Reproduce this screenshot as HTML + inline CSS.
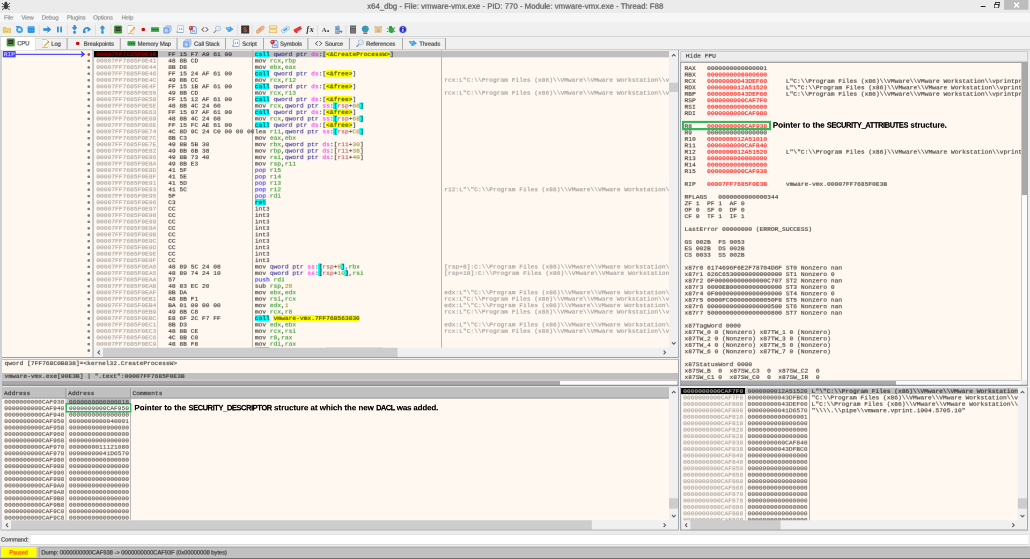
<!DOCTYPE html>
<html lang="en"><head><meta charset="utf-8"><title>x64_dbg</title>
<style>
html,body{margin:0;padding:0;width:1030px;height:559px;overflow:hidden;background:#f0f0f0}
#r{--a:0.3;--b:0.31;position:absolute;left:0;top:0;width:1920px;height:1042px;transform:scale(0.5364583);transform-origin:0 0;will-change:transform;background:#f0f0f0;overflow:hidden;font-family:"Liberation Sans",sans-serif;font-size:11px;color:#000}
#r div,#r span,#r svg{position:absolute;box-sizing:border-box}
#r .m,#r .m span{position:static}
#r .m{position:absolute;font-family:"Liberation Mono","DejaVu Sans Mono",monospace;font-size:11.6667px;line-height:12px;height:12px;white-space:pre;overflow:hidden;color:rgba(0,0,0,var(--a));text-shadow:1px 0 0,0 1px 0,1px 1px 0}
#r .u{white-space:nowrap;line-height:16px;height:16px;font-size:11px;letter-spacing:-0.2px;color:rgba(0,0,0,var(--b));text-shadow:1px 0 0,0 1px 0,1px 1px 0}
#r .u span{position:static}
.sel{background:#c0c0c0}
#r .a{color:rgba(128,128,128,var(--a))}
#r .g{color:rgba(0,131,0,var(--a))}
#r .v{color:rgba(130,130,0,var(--a))}
#r .n{color:rgba(0,0,128,var(--a))}
#r .s{color:rgba(255,0,255,var(--a))}
#r .p{color:rgba(0,0,255,var(--a))}
#r .b{color:rgba(176,52,52,var(--a))}
.c{background:#00ffff}
.y{background:#ffff00}
#r .rd{color:rgba(255,0,0,0.38)}
#r .r1{color:rgba(255,0,0,0.3)}
.an{font-weight:bold;white-space:nowrap;font-size:15px;line-height:18px;height:18px;color:#000;-webkit-text-stroke:0.2px}
#r .an span{position:static}
.k{font-size:14px;letter-spacing:-0.78px;-webkit-text-stroke:0.3px}
#r .z{--a:0.26}
.vs{background:#f0f0f0}
.th{background:#cdcdcd}
.ar{stroke:#606060;stroke-width:2;fill:none}
</style></head>
<body><div id="r">
<div style="left:0px;top:0px;width:1920px;height:24px;background:#ebebeb"></div>
<div style="left:0px;top:24px;width:1920px;height:17px;background:#f5f6f7"></div>
<div style="left:0px;top:41px;width:1920px;height:27px;background:#f0f0f0"></div>
<div style="left:0px;top:67px;width:1920px;height:2px;background:#d3d3d3"></div>
<div class="u" style="left:0;top:2px;width:1920px;text-align:center;font-size:14.6px;line-height:18px;height:18px;letter-spacing:0;color:rgba(60,60,60,0.34)">x64_dbg - File: vmware-vmx.exe - PID: 770 - Module: vmware-vmx.exe - Thread: F88</div>
<svg style="left:2px;top:1px" width="18" height="19" viewBox="0 0 18 19"><g fill="#3a3a3a" stroke="#3a3a3a"><ellipse cx="9" cy="11" rx="3.600" ry="5"/><circle cx="9" cy="5" r="2.300"/><path d="M5.500 8L1.500 5M12.500 8l4-3M5.500 11.500H1M12.500 11.500H17M5.500 14.500L2 17.500M12.500 14.500l3.500 3" stroke-width="1.500" fill="none"/></g></svg>
<div style="left:1872px;top:0px;width:45px;height:18px;background:#bdbdbd"></div>
<svg style="left:1887px;top:3px" width="16" height="13" viewBox="0 0 16 13"><path d="M3.5 2l9 9M12.5 2l-9 9" stroke="#fff" stroke-width="2.600" fill="none"/></svg>
<div style="left:1828px;top:10.5px;width:9px;height:2.5px;background:#1b1b2b"></div>
<div style="left:1855px;top:4px;width:9px;height:8px;border:1.5px solid #333;border-top-width:2.5px;background:#ebebeb"></div>
<div style="left:1852.5px;top:7px;width:9px;height:8px;border:1.5px solid #333;border-top-width:2.5px;background:#f4f4f4"></div>
<div class="u" style="left:7.3px;top:24px;color:rgba(110,110,110,var(--b))">File</div>
<div class="u" style="left:39.5px;top:24px;color:rgba(110,110,110,var(--b))">View</div>
<div class="u" style="left:77.3px;top:24px;color:rgba(110,110,110,var(--b))">Debug</div>
<div class="u" style="left:124.2px;top:24px;color:rgba(110,110,110,var(--b))">Plugins</div>
<div class="u" style="left:173.3px;top:24px;color:rgba(110,110,110,var(--b))">Options</div>
<div class="u" style="left:226px;top:24px;color:rgba(110,110,110,var(--b))">Help</div>
<svg style="left:4.9px;top:47.3px" width="16" height="16" viewBox="0 0 16 16"><path d="M1 4.500h5l1.500 1.500H15v8.500H1z" fill="#ecd377" stroke="#d2b558" stroke-width="1"/><path d="M2 3h4l1 1.500H2z" fill="#e2c45e"/><circle cx="5" cy="12" r="1" fill="#f08a7a"/><circle cx="9" cy="12" r="1" fill="#f08a7a"/></svg>
<svg style="left:27.8px;top:47.3px" width="16" height="16" viewBox="0 0 16 16"><circle cx="8.500" cy="8.500" r="6.500" fill="#4aa3ea"/><circle cx="8.500" cy="8.500" r="2.600" fill="#d8ecfb"/><path d="M1 1.500l7-.5-2.500 6z" fill="#2f8fe2"/><path d="M5.500 5.500l3 3" stroke="#d8ecfb" stroke-width="1.500"/></svg>
<svg style="left:50.2px;top:47.3px" width="16" height="16" viewBox="0 0 16 16"><rect x="1.500" y="2" width="13" height="12" rx="1.500" fill="#2f8fe2"/><rect x="1.500" y="2" width="13" height="3" rx="1" fill="#5aa8ea"/><rect x="4" y="8" width="3" height="3" fill="#25c0e8"/><rect x="9" y="8" width="3" height="3" fill="#25c0e8"/></svg>
<div style="left:72.4px;top:46px;width:2px;height:19px;background:#e0e0e0"></div>
<svg style="left:79.6px;top:47.3px" width="16" height="16" viewBox="0 0 16 16"><path d="M0.500 5.500h8V1.500l7 6.500-7 6.500v-4h-8z" fill="#2f8fe2"/></svg>
<svg style="left:102.5px;top:47.3px" width="16" height="16" viewBox="0 0 16 16"><rect x="3" y="2.500" width="3.600" height="11" rx="1" fill="#2f8fe2"/><rect x="9.400" y="2.500" width="3.600" height="11" rx="1" fill="#2f8fe2"/></svg>
<div style="left:124.5px;top:46px;width:2px;height:19px;background:#e0e0e0"></div>
<svg style="left:131.2px;top:47.3px" width="16" height="16" viewBox="0 0 16 16"><path d="M6 0h4v4h3.500L8 10 2.500 4H6z" fill="#2f8fe2"/><circle cx="8" cy="13.200" r="2.600" fill="#2f8fe2"/></svg>
<svg style="left:154.4px;top:47.3px" width="16" height="16" viewBox="0 0 16 16"><path d="M2.500 11a5.500 5.500 0 0 1 8.500-5" fill="none" stroke="#2f8fe2" stroke-width="3"/><path d="M9 2.500l7 5-6.500 5z" fill="#2f8fe2"/><circle cx="3.200" cy="12.500" r="2.600" fill="#2f8fe2"/></svg>
<div style="left:177px;top:46px;width:2px;height:19px;background:#e0e0e0"></div>
<svg style="left:183.3px;top:47.3px" width="16" height="16" viewBox="0 0 16 16"><path d="M8 0l5.500 6H10v4H6V6H2.500z" fill="#2f8fe2"/><circle cx="8" cy="13.200" r="2.600" fill="#19a9e6"/></svg>
<div style="left:206px;top:46px;width:2px;height:19px;background:#e0e0e0"></div>
<svg style="left:212px;top:47.3px" width="16" height="16" viewBox="0 0 16 16"><rect x="0.500" y="0.500" width="15" height="15" rx="2" fill="#3f9a3c"/><rect x="3.500" y="3" width="9" height="8" fill="#3b2f30"/><rect x="5" y="5" width="6" height="4" fill="#5b4b55"/></svg>
<svg style="left:236.2px;top:47.3px" width="16" height="16" viewBox="0 0 16 16"><path d="M2.500 0.500h8l3 3v12h-11z" fill="#fbfbfb" stroke="#b9c0cc" stroke-width="1"/><path d="M5 14.500l1-3 7-7 2 2-7 7z" fill="#e7b94a"/><circle cx="14" cy="5" r="1.300" fill="#e8554d"/></svg>
<svg style="left:258.6px;top:47.3px" width="16" height="16" viewBox="0 0 16 16"><circle cx="8" cy="8" r="3.300" fill="#c01018"/></svg>
<svg style="left:281px;top:47.3px" width="16" height="16" viewBox="0 0 16 16"><rect x="0.500" y="4" width="15" height="8.500" rx="1" fill="#3f9f4b"/><rect x="3" y="7.500" width="2.500" height="1.500" fill="#1d4d25"/><rect x="7" y="7.500" width="2.500" height="1.500" fill="#1d4d25"/><rect x="11" y="7.500" width="2.500" height="1.500" fill="#1d4d25"/></svg>
<svg style="left:304.2px;top:47.3px" width="16" height="16" viewBox="0 0 16 16"><path d="M1 5l4-4h10v10l-4 4H1z" fill="#b9d2f2" stroke="#7d9fe6" stroke-width="1"/><rect x="1.500" y="5" width="9.500" height="9.500" fill="#8fb3ee" stroke="#6c8fe0" stroke-width="1"/><rect x="4" y="7.500" width="4.500" height="4.500" fill="#c7dcf7"/></svg>
<svg style="left:327.7px;top:47.3px" width="16" height="16" viewBox="0 0 16 16"><path d="M3.500 1h10.500v12.500H1.500v-2h2z" fill="#f3f6fa" stroke="#9aa6b8" stroke-width="1"/><path d="M7.500 6L6 7.500 7.500 9M10 6l1.500 1.500L10 9" fill="none" stroke="#4a5568" stroke-width="1"/></svg>
<svg style="left:351.2px;top:47.3px" width="16" height="16" viewBox="0 0 16 16"><path d="M4.500 2.500h8l2.500 2.500v10h-10.500z" fill="#dfe9f8" stroke="#6d8fd0" stroke-width="1.300"/><rect x="7" y="9" width="6" height="4" fill="#9db9e8"/><circle cx="5" cy="5.500" r="4" fill="#cf3a30"/><circle cx="4" cy="4.500" r="1.400" fill="#f4a9a0"/></svg>
<svg style="left:373.8px;top:47.3px" width="16" height="16" viewBox="0 0 16 16"><path d="M6.500 4L2 8l4.500 4M9.500 4L14 8l-4.500 4" fill="none" stroke="#505050" stroke-width="1.300"/></svg>
<svg style="left:397px;top:47.3px" width="16" height="16" viewBox="0 0 16 16"><circle cx="9.500" cy="6" r="4.800" fill="#dcebfa" stroke="#a9b8c8" stroke-width="1.400"/><path d="M6 9.500L1.500 14.500" stroke="#8f959c" stroke-width="2.400" fill="none"/></svg>
<svg style="left:420.2px;top:47.3px" width="16" height="16" viewBox="0 0 16 16"><path d="M0.500 3.500c3 1 4.500 1 6.500 0l2.500-1.500 2 2.500 4 3-4 2.500c-2 3-6 3.500-8.500 2.500 1.500-.5 2.500-1 3-2C3 10 1 7 .5 3.500z" fill="#4aa3e8"/><path d="M2 4.500c2 1 4 1 5.500 .2l1.500 2-4 1z" fill="#8cc6f2"/></svg>
<div style="left:441.7px;top:46px;width:2px;height:19px;background:#e0e0e0"></div>
<svg style="left:448.9px;top:47.3px" width="16" height="16" viewBox="0 0 16 16"><rect x="0.500" y="0.500" width="15" height="15" fill="#3a3534"/><text x="8" y="13" font-family="Liberation Sans,sans-serif" font-size="13" font-weight="bold" text-anchor="middle" fill="#c8602c">$</text></svg>
<div style="left:468.6px;top:46px;width:2px;height:19px;background:#e0e0e0"></div>
<svg style="left:477px;top:47.3px" width="16" height="16" viewBox="0 0 16 16"><rect x="-1" y="5" width="18" height="6.500" rx="3.200" fill="#eab98c" stroke="#d89a66" stroke-width="1" transform="rotate(-40 8 8)"/><circle cx="6.800" cy="9" r="0.900" fill="#e0584c"/><circle cx="9.200" cy="7" r="0.900" fill="#e0584c"/></svg>
<svg style="left:500.9px;top:47.3px" width="16" height="16" viewBox="0 0 16 16"><rect x="1" y="1" width="14" height="5.500" rx="1.500" fill="#f7e9a8" stroke="#d9a666" stroke-width="1.200"/><rect x="1" y="8.500" width="14" height="5.500" rx="1.500" fill="#f7e9a8" stroke="#d9a666" stroke-width="1.200"/></svg>
<svg style="left:523.6px;top:47.3px" width="16" height="16" viewBox="0 0 16 16"><rect x="0" y="5" width="16" height="6.500" rx="1.500" fill="#dbe9f7" stroke="#8ab0d8" stroke-width="1" transform="rotate(-35 8 8)"/><rect x="4" y="6.800" width="8" height="2.600" fill="#3f97e6" transform="rotate(-35 8 8)"/></svg>
<svg style="left:546.7px;top:47.3px" width="16" height="16" viewBox="0 0 16 16"><rect x="0.500" y="4.500" width="15" height="6.500" rx="1" fill="#ee3434" transform="rotate(-28 8 8)"/><path d="M3 11l2.500 3.500 3-1.500z" fill="#d02222"/></svg>
<svg style="left:569.7px;top:47.3px" width="16" height="16" viewBox="0 0 16 16"><text x="8" y="12.500" font-family="Liberation Serif,serif" font-size="16" font-style="italic" font-weight="bold" text-anchor="middle" fill="#333" textLength="14">fx</text></svg>
<div style="left:590.7px;top:46px;width:2px;height:19px;background:#e0e0e0"></div>
<svg style="left:599px;top:47.3px" width="16" height="16" viewBox="0 0 16 16"><text x="0.500" y="13" font-family="Liberation Serif,serif" font-size="13" font-weight="bold" fill="#3a3a3a">A<tspan font-size="9">a</tspan></text></svg>
<svg style="left:622.6px;top:47.3px" width="16" height="16" viewBox="0 0 16 16"><rect x="1.500" y="2.500" width="8.500" height="13" rx="1" fill="#a9b0ba" stroke="#8e97a4" stroke-width="1"/><rect x="3" y="4.500" width="5.500" height="4" fill="#4b9bea"/><rect x="6.500" y="0" width="1.600" height="3" fill="#9aa2ad"/><path d="M8 11h4V8.500l4 3.500-4 3.500V13H8z" fill="#3d95e6"/></svg>
<div style="left:643.6px;top:46px;width:2px;height:19px;background:#e0e0e0"></div>
<svg style="left:650px;top:47.3px" width="16" height="16" viewBox="0 0 16 16"><rect x="2" y="0.500" width="12" height="15" rx="1" fill="#5d5d5f"/><rect x="3.500" y="2.500" width="9" height="3" fill="#7d8f7d"/><rect x="3.500" y="7.500" width="9" height="6.500" fill="#77777a"/></svg>
<svg style="left:673.2px;top:47.3px" width="16" height="16" viewBox="0 0 16 16"><rect x="4" y="13.500" width="8" height="2.500" rx="1" fill="#b5673a"/><circle cx="8" cy="7" r="6.500" fill="#2f8fe6"/><path d="M5 2c2 1 3 3 2 5s1 3 2 4c2-1 4-3 3.500-6C11 3 8 1 5 2z" fill="#3fae4b"/></svg>
<svg style="left:696.6px;top:47.3px" width="16" height="16" viewBox="0 0 16 16"><rect x="1" y="2" width="14" height="12" rx="1" fill="#e4c9a6"/><path d="M1 2l7 5 7-5" fill="none" stroke="#c9a87e" stroke-width="1"/><rect x="5" y="8" width="6" height="5" fill="#d8b45e"/></svg>
<svg style="left:720.9px;top:47.3px" width="16" height="16" viewBox="0 0 16 16"><ellipse cx="8.500" cy="9" rx="5" ry="5.500" fill="#35a548"/><circle cx="7" cy="4" r="3" fill="#2f9a42"/><path d="M3 7L.5 5M3 11l-2.500 1.500M13 6l2.500-1.500M13.500 11l2.500 2" stroke="#2f9a42" stroke-width="1.600" fill="none"/></svg>
<svg style="left:742.5px;top:47.3px" width="16" height="16" viewBox="0 0 16 16"><circle cx="8" cy="8" r="7.500" fill="#a9adbb"/><circle cx="8" cy="8" r="6" fill="#2b2fd6"/><rect x="7" y="7" width="2.200" height="5" fill="#e8eaff"/><circle cx="8.100" cy="4.700" r="1.300" fill="#e8eaff"/></svg>
<div style="left:0px;top:92px;width:1920px;height:2px;background:#c6c6c6"></div>
<div style="left:1px;top:68px;width:65px;height:25px;background:#fff;border:1px solid #c9c9c9;border-bottom:none"></div>
<svg style="left:11.6px;top:70.5px" width="16" height="16" viewBox="0 0 16 16"><rect x="0.500" y="0.500" width="15" height="15" rx="2" fill="#3f9a3c"/><rect x="3.500" y="3" width="9" height="8" fill="#3b2f30"/><rect x="5" y="5" width="6" height="4" fill="#5b4b55"/></svg>
<div class="u" style="left:31.7px;top:72px;">CPU</div>
<div style="left:67px;top:70.5px;width:57.5px;height:21.5px;background:#f1f1f1;border-top:1px solid #dadada"></div>
<div style="left:123.5px;top:70.5px;width:2.2px;height:21.5px;background:#aaa"></div>
<svg style="left:76.3px;top:73px" width="16" height="16" viewBox="0 0 16 16"><path d="M2.500 0.500h8l3 3v12h-11z" fill="#fbfbfb" stroke="#b9c0cc" stroke-width="1"/><path d="M5 14.500l1-3 7-7 2 2-7 7z" fill="#e7b94a"/><circle cx="14" cy="5" r="1.300" fill="#e8554d"/></svg>
<div class="u" style="left:95px;top:73px;">Log</div>
<div style="left:126px;top:70.5px;width:98px;height:21.5px;background:#f1f1f1;border-top:1px solid #dadada"></div>
<div style="left:223px;top:70.5px;width:2.2px;height:21.5px;background:#aaa"></div>
<svg style="left:136.5px;top:73px" width="16" height="16" viewBox="0 0 16 16"><circle cx="8" cy="8" r="3.300" fill="#c01018"/></svg>
<div class="u" style="left:155.8px;top:73px;">Breakpoints</div>
<div style="left:225.5px;top:70.5px;width:104px;height:21.5px;background:#f1f1f1;border-top:1px solid #dadada"></div>
<div style="left:328.5px;top:70.5px;width:2.2px;height:21.5px;background:#aaa"></div>
<svg style="left:236.8px;top:73px" width="16" height="16" viewBox="0 0 16 16"><rect x="0.500" y="4" width="15" height="8.500" rx="1" fill="#3f9f4b"/><rect x="3" y="7.500" width="2.500" height="1.500" fill="#1d4d25"/><rect x="7" y="7.500" width="2.500" height="1.500" fill="#1d4d25"/><rect x="11" y="7.500" width="2.500" height="1.500" fill="#1d4d25"/></svg>
<div class="u" style="left:256.1px;top:73px;">Memory Map</div>
<div style="left:331px;top:70.5px;width:88.5px;height:21.5px;background:#f1f1f1;border-top:1px solid #dadada"></div>
<div style="left:418.5px;top:70.5px;width:2.2px;height:21.5px;background:#aaa"></div>
<svg style="left:341.4px;top:73px" width="16" height="16" viewBox="0 0 16 16"><path d="M1 5l4-4h10v10l-4 4H1z" fill="#b9d2f2" stroke="#7d9fe6" stroke-width="1"/><rect x="1.500" y="5" width="9.500" height="9.500" fill="#8fb3ee" stroke="#6c8fe0" stroke-width="1"/><rect x="4" y="7.500" width="4.500" height="4.500" fill="#c7dcf7"/></svg>
<div class="u" style="left:361.3px;top:73px;">Call Stack</div>
<div style="left:421px;top:70.5px;width:69.5px;height:21.5px;background:#f1f1f1;border-top:1px solid #dadada"></div>
<div style="left:489.5px;top:70.5px;width:2.2px;height:21.5px;background:#aaa"></div>
<svg style="left:431.8px;top:73px" width="16" height="16" viewBox="0 0 16 16"><path d="M3.500 1h10.500v12.500H1.500v-2h2z" fill="#f3f6fa" stroke="#9aa6b8" stroke-width="1"/><path d="M7.500 6L6 7.500 7.500 9M10 6l1.500 1.500L10 9" fill="none" stroke="#4a5568" stroke-width="1"/></svg>
<div class="u" style="left:451.1px;top:73px;">Script</div>
<div style="left:492px;top:70.5px;width:81.5px;height:21.5px;background:#f1f1f1;border-top:1px solid #dadada"></div>
<div style="left:572.5px;top:70.5px;width:2.2px;height:21.5px;background:#aaa"></div>
<svg style="left:502.8px;top:73px" width="16" height="16" viewBox="0 0 16 16"><path d="M4.500 2.500h8l2.500 2.500v10h-10.500z" fill="#dfe9f8" stroke="#6d8fd0" stroke-width="1.300"/><rect x="7" y="9" width="6" height="4" fill="#9db9e8"/><circle cx="5" cy="5.500" r="4" fill="#cf3a30"/><circle cx="4" cy="4.500" r="1.400" fill="#f4a9a0"/></svg>
<div class="u" style="left:521.6px;top:73px;">Symbols</div>
<div style="left:575px;top:70.5px;width:76px;height:21.5px;background:#f1f1f1;border-top:1px solid #dadada"></div>
<div style="left:650px;top:70.5px;width:2.2px;height:21.5px;background:#aaa"></div>
<svg style="left:585.8px;top:73px" width="16" height="16" viewBox="0 0 16 16"><path d="M6.500 4L2 8l4.500 4M9.500 4L14 8l-4.500 4" fill="none" stroke="#505050" stroke-width="1.300"/></svg>
<div class="u" style="left:605.3px;top:73px;">Source</div>
<div style="left:652.5px;top:70.5px;width:97px;height:21.5px;background:#f1f1f1;border-top:1px solid #dadada"></div>
<div style="left:748.5px;top:70.5px;width:2.2px;height:21.5px;background:#aaa"></div>
<svg style="left:662.8px;top:73px" width="16" height="16" viewBox="0 0 16 16"><circle cx="9.500" cy="6" r="4.800" fill="#dcebfa" stroke="#a9b8c8" stroke-width="1.400"/><path d="M6 9.500L1.500 14.500" stroke="#8f959c" stroke-width="2.400" fill="none"/></svg>
<div class="u" style="left:681.9px;top:73px;">References</div>
<div style="left:751px;top:70.5px;width:79px;height:21.5px;background:#f1f1f1;border-top:1px solid #dadada"></div>
<div style="left:829px;top:70.5px;width:2.2px;height:21.5px;background:#aaa"></div>
<svg style="left:761.6px;top:73px" width="16" height="16" viewBox="0 0 16 16"><path d="M0.500 3.500c3 1 4.500 1 6.500 0l2.500-1.500 2 2.500 4 3-4 2.500c-2 3-6 3.500-8.500 2.500 1.500-.5 2.500-1 3-2C3 10 1 7 .5 3.500z" fill="#4aa3e8"/><path d="M2 4.500c2 1 4 1 5.500 .2l1.500 2-4 1z" fill="#8cc6f2"/></svg>
<div class="u" style="left:781px;top:73px;">Threads</div>
<div style="left:0px;top:93px;width:4px;height:896px;background:#cfd1d5"></div>
<div style="left:4px;top:94px;width:1260px;height:571px;background:#fff8f0"></div>
<div style="left:4px;top:665px;width:1262px;height:2px;background:#9c9fa5"></div>
<div style="left:1264px;top:93px;width:2px;height:574px;background:#a3a6ac"></div>
<div style="left:4px;top:669px;width:1262px;height:2px;background:#bcbfc5"></div>
<div style="left:4px;top:671px;width:1260px;height:46px;background:#fff8f0"></div>
<div style="left:1264px;top:669px;width:2px;height:50px;background:#a3a6ac"></div>
<div style="left:4px;top:717px;width:1262px;height:2px;background:#85878d"></div>
<div style="left:4px;top:721px;width:1260px;height:266px;background:#fff8f0"></div>
<div style="left:1264px;top:721px;width:2px;height:268px;background:#a3a6ac"></div>
<div style="left:4px;top:987px;width:1262px;height:2px;background:#b4b7bd"></div>
<div style="left:1268px;top:115px;width:648px;height:604px;background:#a3a6ac"></div>
<div style="left:1270px;top:117px;width:644px;height:600px;background:#fff8f0"></div>
<div style="left:1268px;top:721px;width:648px;height:268px;background:#a3a6ac"></div>
<div style="left:1270px;top:722px;width:644px;height:265px;background:#fff8f0"></div>
<div class="sel" style="left:294px;top:95px;width:953px;height:12px;"></div>
<div style="left:175px;top:95px;width:119px;height:12px;background:#000"></div>
<div style="left:172px;top:94px;width:3px;height:571px;background:#c6c6c6"></div>
<div style="left:293px;top:107px;width:2px;height:541px;background:#d6d2ce"></div>
<div style="left:470px;top:94px;width:2px;height:554px;background:#b9b6b2"></div>
<div style="left:822px;top:94px;width:2px;height:554px;background:#b9b6b2"></div>
<div class="m r1 z" style="left:179px;top:95px;">00007FF7685F0E3B</div>
<div class="m" style="left:313px;top:95px;">FF 15 F7 A9 61 00</div>
<div class="m" style="left:474.5px;top:95px;"><span class="c">call</span> <span class="n">qword ptr</span> <span class="s">ds</span>:[<span class="y">&lt;&amp;CreateProcessW&gt;</span>]</div>
<div style="left:163px;top:99px;width:5px;height:5px;border-radius:50%;background:#ff2020"></div>
<div class="m a z" style="left:179px;top:107px;">00007FF7685F0E41</div>
<div class="m" style="left:313px;top:107px;">48 8B CD</div>
<div class="m" style="left:474.5px;top:107px;">mov <span class="g">rcx</span>,<span class="g">rbp</span></div>
<div style="left:163px;top:111px;width:5px;height:5px;border-radius:50%;background:#7c7c7c"></div>
<div class="m a z" style="left:179px;top:119px;">00007FF7685F0E44</div>
<div class="m" style="left:313px;top:119px;">8B D8</div>
<div class="m" style="left:474.5px;top:119px;">mov <span class="g">ebx</span>,<span class="g">eax</span></div>
<div style="left:163px;top:123px;width:5px;height:5px;border-radius:50%;background:#7c7c7c"></div>
<div class="m a z" style="left:179px;top:131px;">00007FF7685F0E46</div>
<div class="m" style="left:313px;top:131px;">FF 15 24 AF 61 00</div>
<div class="m" style="left:474.5px;top:131px;"><span class="c">call</span> <span class="n">qword ptr</span> <span class="s">ds</span>:[<span class="y">&lt;&amp;free&gt;</span>]</div>
<div style="left:163px;top:135px;width:5px;height:5px;border-radius:50%;background:#7c7c7c"></div>
<div class="m a z" style="left:179px;top:143px;">00007FF7685F0E4C</div>
<div class="m" style="left:313px;top:143px;">49 8B CC</div>
<div class="m" style="left:474.5px;top:143px;">mov <span class="g">rcx</span>,<span class="g">r12</span></div>
<div class="m a" style="left:827.5px;top:143px;width:419.5px;">rcx:L"C:\\Program Files (x86)\\VMware\\VMware Workstation\\vprintproxy.exe"</div>
<div style="left:163px;top:147px;width:5px;height:5px;border-radius:50%;background:#7c7c7c"></div>
<div class="m a z" style="left:179px;top:155px;">00007FF7685F0E4F</div>
<div class="m" style="left:313px;top:155px;">FF 15 1B AF 61 00</div>
<div class="m" style="left:474.5px;top:155px;"><span class="c">call</span> <span class="n">qword ptr</span> <span class="s">ds</span>:[<span class="y">&lt;&amp;free&gt;</span>]</div>
<div style="left:163px;top:159px;width:5px;height:5px;border-radius:50%;background:#7c7c7c"></div>
<div class="m a z" style="left:179px;top:167px;">00007FF7685F0E55</div>
<div class="m" style="left:313px;top:167px;">49 8B CD</div>
<div class="m" style="left:474.5px;top:167px;">mov <span class="g">rcx</span>,<span class="g">r13</span></div>
<div class="m a" style="left:827.5px;top:167px;width:419.5px;">rcx:L"C:\\Program Files (x86)\\VMware\\VMware Workstation\\vprintproxy.exe"</div>
<div style="left:163px;top:171px;width:5px;height:5px;border-radius:50%;background:#7c7c7c"></div>
<div class="m a z" style="left:179px;top:179px;">00007FF7685F0E58</div>
<div class="m" style="left:313px;top:179px;">FF 15 12 AF 61 00</div>
<div class="m" style="left:474.5px;top:179px;"><span class="c">call</span> <span class="n">qword ptr</span> <span class="s">ds</span>:[<span class="y">&lt;&amp;free&gt;</span>]</div>
<div style="left:163px;top:183px;width:5px;height:5px;border-radius:50%;background:#7c7c7c"></div>
<div class="m a z" style="left:179px;top:191px;">00007FF7685F0E5E</div>
<div class="m" style="left:313px;top:191px;">48 8B 4C 24 60</div>
<div class="m" style="left:474.5px;top:191px;">mov <span class="g">rcx</span>,<span class="n">qword ptr</span> <span class="s">ss</span>:<span class="c">[</span><span class="b">rsp</span>+<span class="v">60</span><span class="c">]</span></div>
<div style="left:163px;top:195px;width:5px;height:5px;border-radius:50%;background:#7c7c7c"></div>
<div class="m a z" style="left:179px;top:203px;">00007FF7685F0E63</div>
<div class="m" style="left:313px;top:203px;">FF 15 07 AF 61 00</div>
<div class="m" style="left:474.5px;top:203px;"><span class="c">call</span> <span class="n">qword ptr</span> <span class="s">ds</span>:[<span class="y">&lt;&amp;free&gt;</span>]</div>
<div style="left:163px;top:207px;width:5px;height:5px;border-radius:50%;background:#7c7c7c"></div>
<div class="m a z" style="left:179px;top:215px;">00007FF7685F0E69</div>
<div class="m" style="left:313px;top:215px;">48 8B 4C 24 68</div>
<div class="m" style="left:474.5px;top:215px;">mov <span class="g">rcx</span>,<span class="n">qword ptr</span> <span class="s">ss</span>:<span class="c">[</span><span class="b">rsp</span>+<span class="v">68</span><span class="c">]</span></div>
<div style="left:163px;top:219px;width:5px;height:5px;border-radius:50%;background:#7c7c7c"></div>
<div class="m a z" style="left:179px;top:227px;">00007FF7685F0E6E</div>
<div class="m" style="left:313px;top:227px;">FF 15 FC AE 61 00</div>
<div class="m" style="left:474.5px;top:227px;"><span class="c">call</span> <span class="n">qword ptr</span> <span class="s">ds</span>:[<span class="y">&lt;&amp;free&gt;</span>]</div>
<div style="left:163px;top:231px;width:5px;height:5px;border-radius:50%;background:#7c7c7c"></div>
<div class="m a z" style="left:179px;top:239px;">00007FF7685F0E74</div>
<div class="m" style="left:313px;top:239px;">4C 8D 9C 24 C0 00 00 00</div>
<div class="m" style="left:474.5px;top:239px;">lea <span class="g">r11</span>,<span class="n">qword ptr</span> <span class="s">ss</span>:<span class="c">[</span><span class="b">rsp</span>+<span class="v">C0</span><span class="c">]</span></div>
<div style="left:163px;top:243px;width:5px;height:5px;border-radius:50%;background:#7c7c7c"></div>
<div class="m a z" style="left:179px;top:251px;">00007FF7685F0E7C</div>
<div class="m" style="left:313px;top:251px;">8B C3</div>
<div class="m" style="left:474.5px;top:251px;">mov <span class="g">eax</span>,<span class="g">ebx</span></div>
<div style="left:163px;top:255px;width:5px;height:5px;border-radius:50%;background:#7c7c7c"></div>
<div class="m a z" style="left:179px;top:263px;">00007FF7685F0E7E</div>
<div class="m" style="left:313px;top:263px;">49 8B 5B 30</div>
<div class="m" style="left:474.5px;top:263px;">mov <span class="g">rbx</span>,<span class="n">qword ptr</span> <span class="s">ds</span>:[<span class="b">r11</span>+<span class="v">30</span>]</div>
<div style="left:163px;top:267px;width:5px;height:5px;border-radius:50%;background:#7c7c7c"></div>
<div class="m a z" style="left:179px;top:275px;">00007FF7685F0E82</div>
<div class="m" style="left:313px;top:275px;">49 8B 6B 38</div>
<div class="m" style="left:474.5px;top:275px;">mov <span class="g">rbp</span>,<span class="n">qword ptr</span> <span class="s">ds</span>:[<span class="b">r11</span>+<span class="v">38</span>]</div>
<div style="left:163px;top:279px;width:5px;height:5px;border-radius:50%;background:#7c7c7c"></div>
<div class="m a z" style="left:179px;top:287px;">00007FF7685F0E86</div>
<div class="m" style="left:313px;top:287px;">49 8B 73 40</div>
<div class="m" style="left:474.5px;top:287px;">mov <span class="g">rsi</span>,<span class="n">qword ptr</span> <span class="s">ds</span>:[<span class="b">r11</span>+<span class="v">40</span>]</div>
<div style="left:163px;top:291px;width:5px;height:5px;border-radius:50%;background:#7c7c7c"></div>
<div class="m a z" style="left:179px;top:299px;">00007FF7685F0E8A</div>
<div class="m" style="left:313px;top:299px;">49 8B E3</div>
<div class="m" style="left:474.5px;top:299px;">mov <span class="g">rsp</span>,<span class="g">r11</span></div>
<div style="left:163px;top:303px;width:5px;height:5px;border-radius:50%;background:#7c7c7c"></div>
<div class="m a z" style="left:179px;top:311px;">00007FF7685F0E8D</div>
<div class="m" style="left:313px;top:311px;">41 5F</div>
<div class="m" style="left:474.5px;top:311px;"><span class="p">pop</span> <span class="g">r15</span></div>
<div style="left:163px;top:315px;width:5px;height:5px;border-radius:50%;background:#7c7c7c"></div>
<div class="m a z" style="left:179px;top:323px;">00007FF7685F0E8F</div>
<div class="m" style="left:313px;top:323px;">41 5E</div>
<div class="m" style="left:474.5px;top:323px;"><span class="p">pop</span> <span class="g">r14</span></div>
<div style="left:163px;top:327px;width:5px;height:5px;border-radius:50%;background:#7c7c7c"></div>
<div class="m a z" style="left:179px;top:335px;">00007FF7685F0E91</div>
<div class="m" style="left:313px;top:335px;">41 5D</div>
<div class="m" style="left:474.5px;top:335px;"><span class="p">pop</span> <span class="g">r13</span></div>
<div style="left:163px;top:339px;width:5px;height:5px;border-radius:50%;background:#7c7c7c"></div>
<div class="m a z" style="left:179px;top:347px;">00007FF7685F0E93</div>
<div class="m" style="left:313px;top:347px;">41 5C</div>
<div class="m" style="left:474.5px;top:347px;"><span class="p">pop</span> <span class="g">r12</span></div>
<div class="m a" style="left:827.5px;top:347px;width:419.5px;">r12:L"\"C:\\Program Files (x86)\\VMware\\VMware Workstation\\vprintproxy.exe\""</div>
<div style="left:163px;top:351px;width:5px;height:5px;border-radius:50%;background:#7c7c7c"></div>
<div class="m a z" style="left:179px;top:359px;">00007FF7685F0E95</div>
<div class="m" style="left:313px;top:359px;">5F</div>
<div class="m" style="left:474.5px;top:359px;"><span class="p">pop</span> <span class="g">rdi</span></div>
<div style="left:163px;top:363px;width:5px;height:5px;border-radius:50%;background:#7c7c7c"></div>
<div class="m a z" style="left:179px;top:371px;">00007FF7685F0E96</div>
<div class="m" style="left:313px;top:371px;">C3</div>
<div class="m" style="left:474.5px;top:371px;"><span class="c">ret</span></div>
<div style="left:163px;top:375px;width:5px;height:5px;border-radius:50%;background:#7c7c7c"></div>
<div class="m a z" style="left:179px;top:383px;">00007FF7685F0E97</div>
<div class="m" style="left:313px;top:383px;">CC</div>
<div class="m" style="left:474.5px;top:383px;">int3</div>
<div style="left:163px;top:387px;width:5px;height:5px;border-radius:50%;background:#7c7c7c"></div>
<div class="m a z" style="left:179px;top:395px;">00007FF7685F0E98</div>
<div class="m" style="left:313px;top:395px;">CC</div>
<div class="m" style="left:474.5px;top:395px;">int3</div>
<div style="left:163px;top:399px;width:5px;height:5px;border-radius:50%;background:#7c7c7c"></div>
<div class="m a z" style="left:179px;top:407px;">00007FF7685F0E99</div>
<div class="m" style="left:313px;top:407px;">CC</div>
<div class="m" style="left:474.5px;top:407px;">int3</div>
<div style="left:163px;top:411px;width:5px;height:5px;border-radius:50%;background:#7c7c7c"></div>
<div class="m a z" style="left:179px;top:419px;">00007FF7685F0E9A</div>
<div class="m" style="left:313px;top:419px;">CC</div>
<div class="m" style="left:474.5px;top:419px;">int3</div>
<div style="left:163px;top:423px;width:5px;height:5px;border-radius:50%;background:#7c7c7c"></div>
<div class="m a z" style="left:179px;top:431px;">00007FF7685F0E9B</div>
<div class="m" style="left:313px;top:431px;">CC</div>
<div class="m" style="left:474.5px;top:431px;">int3</div>
<div style="left:163px;top:435px;width:5px;height:5px;border-radius:50%;background:#7c7c7c"></div>
<div class="m a z" style="left:179px;top:443px;">00007FF7685F0E9C</div>
<div class="m" style="left:313px;top:443px;">CC</div>
<div class="m" style="left:474.5px;top:443px;">int3</div>
<div style="left:163px;top:447px;width:5px;height:5px;border-radius:50%;background:#7c7c7c"></div>
<div class="m a z" style="left:179px;top:455px;">00007FF7685F0E9D</div>
<div class="m" style="left:313px;top:455px;">CC</div>
<div class="m" style="left:474.5px;top:455px;">int3</div>
<div style="left:163px;top:459px;width:5px;height:5px;border-radius:50%;background:#7c7c7c"></div>
<div class="m a z" style="left:179px;top:467px;">00007FF7685F0E9E</div>
<div class="m" style="left:313px;top:467px;">CC</div>
<div class="m" style="left:474.5px;top:467px;">int3</div>
<div style="left:163px;top:471px;width:5px;height:5px;border-radius:50%;background:#7c7c7c"></div>
<div class="m a z" style="left:179px;top:479px;">00007FF7685F0E9F</div>
<div class="m" style="left:313px;top:479px;">CC</div>
<div class="m" style="left:474.5px;top:479px;">int3</div>
<div style="left:163px;top:483px;width:5px;height:5px;border-radius:50%;background:#7c7c7c"></div>
<div class="m a z" style="left:179px;top:491px;">00007FF7685F0EA0</div>
<div class="m" style="left:313px;top:491px;">48 89 5C 24 08</div>
<div class="m" style="left:474.5px;top:491px;">mov <span class="n">qword ptr</span> <span class="s">ss</span>:<span class="c">[</span><span class="b">rsp</span>+<span class="v">8</span><span class="c">]</span>,<span class="g">rbx</span></div>
<div class="m a" style="left:827.5px;top:491px;width:419.5px;">[rsp+8]:C:\\Program Files (x86)\\VMware\\VMware Workstation\\vprintproxy.exe</div>
<div style="left:163px;top:495px;width:5px;height:5px;border-radius:50%;background:#7c7c7c"></div>
<div class="m a z" style="left:179px;top:503px;">00007FF7685F0EA5</div>
<div class="m" style="left:313px;top:503px;">48 89 74 24 10</div>
<div class="m" style="left:474.5px;top:503px;">mov <span class="n">qword ptr</span> <span class="s">ss</span>:<span class="c">[</span><span class="b">rsp</span>+<span class="v">10</span><span class="c">]</span>,<span class="g">rsi</span></div>
<div class="m a" style="left:827.5px;top:503px;width:419.5px;">[rsp+10]:C:\\Program Files (x86)\\VMware\\VMware Workstation\\vprintproxy.exe</div>
<div style="left:163px;top:507px;width:5px;height:5px;border-radius:50%;background:#7c7c7c"></div>
<div class="m a z" style="left:179px;top:515px;">00007FF7685F0EAA</div>
<div class="m" style="left:313px;top:515px;">57</div>
<div class="m" style="left:474.5px;top:515px;"><span class="p">push</span> <span class="g">rdi</span></div>
<div style="left:163px;top:519px;width:5px;height:5px;border-radius:50%;background:#7c7c7c"></div>
<div class="m a z" style="left:179px;top:527px;">00007FF7685F0EAB</div>
<div class="m" style="left:313px;top:527px;">48 83 EC 20</div>
<div class="m" style="left:474.5px;top:527px;">sub <span class="g">rsp</span>,<span class="v">20</span></div>
<div style="left:163px;top:531px;width:5px;height:5px;border-radius:50%;background:#7c7c7c"></div>
<div class="m a z" style="left:179px;top:539px;">00007FF7685F0EAF</div>
<div class="m" style="left:313px;top:539px;">8B DA</div>
<div class="m" style="left:474.5px;top:539px;">mov <span class="g">ebx</span>,<span class="g">edx</span></div>
<div class="m a" style="left:827.5px;top:539px;width:419.5px;">edx:L"\"C:\\Program Files (x86)\\VMware\\VMware Workstation\\vprintproxy.exe\""</div>
<div style="left:163px;top:543px;width:5px;height:5px;border-radius:50%;background:#7c7c7c"></div>
<div class="m a z" style="left:179px;top:551px;">00007FF7685F0EB1</div>
<div class="m" style="left:313px;top:551px;">48 8B F1</div>
<div class="m" style="left:474.5px;top:551px;">mov <span class="g">rsi</span>,<span class="g">rcx</span></div>
<div class="m a" style="left:827.5px;top:551px;width:419.5px;">rcx:L"C:\\Program Files (x86)\\VMware\\VMware Workstation\\vprintproxy.exe"</div>
<div style="left:163px;top:555px;width:5px;height:5px;border-radius:50%;background:#7c7c7c"></div>
<div class="m a z" style="left:179px;top:563px;">00007FF7685F0EB4</div>
<div class="m" style="left:313px;top:563px;">BA 01 00 00 00</div>
<div class="m" style="left:474.5px;top:563px;">mov <span class="g">edx</span>,<span class="v">1</span></div>
<div class="m a" style="left:827.5px;top:563px;width:419.5px;">edx:L"\"C:\\Program Files (x86)\\VMware\\VMware Workstation\\vprintproxy.exe\""</div>
<div style="left:163px;top:567px;width:5px;height:5px;border-radius:50%;background:#7c7c7c"></div>
<div class="m a z" style="left:179px;top:575px;">00007FF7685F0EB9</div>
<div class="m" style="left:313px;top:575px;">49 8B C8</div>
<div class="m" style="left:474.5px;top:575px;">mov <span class="g">rcx</span>,<span class="g">r8</span></div>
<div class="m a" style="left:827.5px;top:575px;width:419.5px;">rcx:L"C:\\Program Files (x86)\\VMware\\VMware Workstation\\vprintproxy.exe"</div>
<div style="left:163px;top:579px;width:5px;height:5px;border-radius:50%;background:#7c7c7c"></div>
<div class="m a z" style="left:179px;top:587px;">00007FF7685F0EBC</div>
<div class="m" style="left:313px;top:587px;">E8 6F 2C F7 FF</div>
<div class="m" style="left:474.5px;top:587px;"><span class="c">call</span> <span class="y">vmware-vmx.7FF768563830</span></div>
<div style="left:163px;top:591px;width:5px;height:5px;border-radius:50%;background:#7c7c7c"></div>
<div class="m a z" style="left:179px;top:599px;">00007FF7685F0EC1</div>
<div class="m" style="left:313px;top:599px;">8B D3</div>
<div class="m" style="left:474.5px;top:599px;">mov <span class="g">edx</span>,<span class="g">ebx</span></div>
<div class="m a" style="left:827.5px;top:599px;width:419.5px;">edx:L"\"C:\\Program Files (x86)\\VMware\\VMware Workstation\\vprintproxy.exe\""</div>
<div style="left:163px;top:603px;width:5px;height:5px;border-radius:50%;background:#7c7c7c"></div>
<div class="m a z" style="left:179px;top:611px;">00007FF7685F0EC3</div>
<div class="m" style="left:313px;top:611px;">48 8B CE</div>
<div class="m" style="left:474.5px;top:611px;">mov <span class="g">rcx</span>,<span class="g">rsi</span></div>
<div class="m a" style="left:827.5px;top:611px;width:419.5px;">rcx:L"C:\\Program Files (x86)\\VMware\\VMware Workstation\\vprintproxy.exe"</div>
<div style="left:163px;top:615px;width:5px;height:5px;border-radius:50%;background:#7c7c7c"></div>
<div class="m a z" style="left:179px;top:623px;">00007FF7685F0EC6</div>
<div class="m" style="left:313px;top:623px;">4C 8B C0</div>
<div class="m" style="left:474.5px;top:623px;">mov <span class="g">r8</span>,<span class="g">rax</span></div>
<div style="left:163px;top:627px;width:5px;height:5px;border-radius:50%;background:#7c7c7c"></div>
<div class="m a z" style="left:179px;top:635px;">00007FF7685F0EC9</div>
<div class="m" style="left:313px;top:635px;">48 8B F8</div>
<div class="m" style="left:474.5px;top:635px;">mov <span class="g">rdi</span>,<span class="g">rax</span></div>
<div style="left:163px;top:639px;width:5px;height:5px;border-radius:50%;background:#7c7c7c"></div>
<div class="m a z" style="left:179px;top:647px;height:1px;">00007FF7685F0ECC</div>
<div class="m" style="left:313px;top:647px;height:1px;">FF 15 A6 AE 61 00</div>
<div class="m" style="left:474.5px;top:647px;height:1px;"><span class="c">call</span> <span class="n">qword ptr</span> <span class="s">ds</span>:[<span class="y">&lt;&amp;GetLastError&gt;</span>]</div>
<div style="left:163px;top:651px;width:5px;height:5px;border-radius:50%;background:#7c7c7c"></div>
<div style="left:5px;top:95px;width:24px;height:12px;background:#4040ff"></div>
<div class="m" style="left:6.5px;top:95px;color:rgba(255,255,255,var(--a))">RIP</div>
<div style="left:29px;top:100px;width:128px;height:2px;background:#4040ff"></div>
<svg style="left:148px;top:95px" width="12" height="12" viewBox="0 0 12 12"><path d="M3.500 1l6.500 5-6.500 5 2-5z" fill="#4040ff" stroke="#4040ff" stroke-width="1.200"/></svg>
<div class="vs" style="left:1247px;top:94px;width:17px;height:554px;"></div>
<div class="th" style="left:1247px;top:154px;width:17px;height:17px;"></div>
<svg style="left:1255.5px;top:102.5px;overflow:visible" width="1" height="1"><path class="ar" d="M-3.5 2L0 -1.500 3.500 2"/></svg>
<svg style="left:1255.5px;top:639.5px;overflow:visible" width="1" height="1"><path class="ar" d="M-3.5 -2L0 1.500 3.500 -2"/></svg>
<div class="vs" style="left:175px;top:648px;width:1072px;height:17px;"></div>
<div class="th" style="left:192px;top:648px;width:549px;height:17px;"></div>
<svg style="left:183.5px;top:656.5px;overflow:visible" width="1" height="1"><path class="ar" d="M2 -3.500L-1.500 0 2 3.500"/></svg>
<svg style="left:1238.5px;top:656.5px;overflow:visible" width="1" height="1"><path class="ar" d="M-2 -3.500L1.500 0 -2 3.500"/></svg>
<div class="vs" style="left:1247px;top:648px;width:17px;height:17px;"></div>
<div style="left:4px;top:695px;width:1260px;height:12px;background:#c0c0c0"></div>
<div class="m" style="left:8px;top:671px;">qword [7FF768C0B838]=&lt;kernel32.CreateProcessW&gt;</div>
<div class="m" style="left:8px;top:695px;">vmware-vmx.exe[90E3B] | ".text":00007FF7685F0E3B</div>
<div style="left:4px;top:707px;width:1260px;height:3px;background:#cdcac7"></div>
<div style="left:4px;top:710px;width:1260px;height:7px;background:#fcfcfc"></div>
<div style="left:4px;top:710px;width:1040px;height:7px;background:#a9a9a9"></div>
<div style="left:1262px;top:710px;width:2px;height:7px;background:#c4c4c4"></div>
<div style="left:1268px;top:95px;width:649px;height:20px;background:#cdcdcd"></div>
<div style="left:1270px;top:97px;width:644px;height:16px;background:#ededed"></div>
<div style="left:1270px;top:113px;width:644px;height:2px;background:#d6d7da"></div>
<div class="m" style="left:1278px;top:98px;">Hide FPU</div>
<div class="m" style="left:1275.5px;top:121px;width:627.5px;">RAX   <span class="z">0000000000000001</span></div>
<div class="m" style="left:1275.5px;top:133px;width:627.5px;">RBX   <span class="rd z">0000000008000600</span></div>
<div class="m" style="left:1275.5px;top:145px;width:627.5px;">RCX   <span class="rd z">00000000043DEF60</span>     L"C:\\Program Files (x86)\\VMware\\VMware Workstation\\vprintproxy.exe"</div>
<div class="m" style="left:1275.5px;top:157px;width:627.5px;">RDX   <span class="rd z">0000000012A51520</span>     L"\"C:\\Program Files (x86)\\VMware\\VMware Workstation\\vprintproxy.exe\""</div>
<div class="m" style="left:1275.5px;top:169px;width:627.5px;">RBP   <span class="rd z">00000000043DEF60</span>     L"C:\\Program Files (x86)\\VMware\\VMware Workstation\\vprintproxy.exe"</div>
<div class="m" style="left:1275.5px;top:181px;width:627.5px;">RSP   <span class="rd z">0000000000CAF7F0</span></div>
<div class="m" style="left:1275.5px;top:193px;width:627.5px;">RSI   <span class="rd z">0000000000000000</span></div>
<div class="m" style="left:1275.5px;top:205px;width:627.5px;">RDI   <span class="rd z">0000000000CAF980</span></div>
<div class="m" style="left:1275.5px;top:229px;width:627.5px;">R8    <span class="rd z">0000000000CAF938</span></div>
<div class="m" style="left:1275.5px;top:241px;width:627.5px;">R9    <span class="z">0000000000000000</span></div>
<div class="m" style="left:1275.5px;top:253px;width:627.5px;">R10   <span class="rd z">0000000012A51010</span></div>
<div class="m" style="left:1275.5px;top:265px;width:627.5px;">R11   <span class="rd z">0000000000CAF840</span></div>
<div class="m" style="left:1275.5px;top:277px;width:627.5px;">R12   <span class="rd z">0000000012A51520</span>     L"\"C:\\Program Files (x86)\\VMware\\VMware Workstation\\vprintproxy.exe\""</div>
<div class="m" style="left:1275.5px;top:289px;width:627.5px;">R13   <span class="rd z">0000000000000000</span></div>
<div class="m" style="left:1275.5px;top:301px;width:627.5px;">R14   <span class="rd z">0000000000000000</span></div>
<div class="m" style="left:1275.5px;top:313px;width:627.5px;">R15   <span class="rd z">0000000000CAF938</span></div>
<div class="m" style="left:1275.5px;top:337px;width:627.5px;">RIP   <span class="rd z">00007FF7685F0E3B</span>     vmware-vmx.00007FF7685F0E3B</div>
<div class="m" style="left:1275.5px;top:361px;width:627.5px;">RFLAGS   0000000000000344</div>
<div class="m" style="left:1275.5px;top:373px;width:627.5px;">ZF 1  PF 1  AF 0</div>
<div class="m" style="left:1275.5px;top:385px;width:627.5px;">OF 0  SF 0  DF 0</div>
<div class="m" style="left:1275.5px;top:397px;width:627.5px;">CF 0  TF 1  IF 1</div>
<div class="m" style="left:1275.5px;top:421px;width:627.5px;">LastError 00000000 (ERROR_SUCCESS)</div>
<div class="m" style="left:1275.5px;top:445px;width:627.5px;">GS 002B  FS 0053</div>
<div class="m" style="left:1275.5px;top:457px;width:627.5px;">ES 002B  DS 002B</div>
<div class="m" style="left:1275.5px;top:469px;width:627.5px;">CS 0033  SS 002B</div>
<div class="m" style="left:1275.5px;top:493px;width:627.5px;">x87r0 6174696F6E2F78704D6F ST0 Nonzero nan</div>
<div class="m" style="left:1275.5px;top:505px;width:627.5px;">x87r1 626C6530000000000000 ST1 Nonzero 0</div>
<div class="m" style="left:1275.5px;top:517px;width:627.5px;">x87r2 0F00000000000000C707 ST2 Nonzero nan</div>
<div class="m" style="left:1275.5px;top:529px;width:627.5px;">x87r3 0000EB00000000000000 ST3 Nonzero 0</div>
<div class="m" style="left:1275.5px;top:541px;width:627.5px;">x87r4 0F000000000000000000 ST4 Nonzero 0</div>
<div class="m" style="left:1275.5px;top:553px;width:627.5px;">x87r5 0000FC000000000050F8 ST5 Nonzero nan</div>
<div class="m" style="left:1275.5px;top:565px;width:627.5px;">x87r6 00000000000000000500 ST6 Nonzero nan</div>
<div class="m" style="left:1275.5px;top:577px;width:627.5px;">x87r7 50000000000000000800 ST7 Nonzero nan</div>
<div class="m" style="left:1275.5px;top:601px;width:627.5px;">x87TagWord 0000</div>
<div class="m" style="left:1275.5px;top:613px;width:627.5px;">x87TW_0 0 (Nonzero) x87TW_1 0 (Nonzero)</div>
<div class="m" style="left:1275.5px;top:625px;width:627.5px;">x87TW_2 0 (Nonzero) x87TW_3 0 (Nonzero)</div>
<div class="m" style="left:1275.5px;top:637px;width:627.5px;">x87TW_4 0 (Nonzero) x87TW_5 0 (Nonzero)</div>
<div class="m" style="left:1275.5px;top:649px;width:627.5px;">x87TW_6 0 (Nonzero) x87TW_7 0 (Nonzero)</div>
<div class="m" style="left:1275.5px;top:673px;width:627.5px;">x87StatusWord 0000</div>
<div class="m" style="left:1275.5px;top:685px;width:627.5px;">x87SW_B  0  x87SW_C3  0  x87SW_C2  0</div>
<div class="m" style="left:1275.5px;top:697px;width:627.5px;">x87SW_C1 0  x87SW_C0  0  x87SW_IR  0</div>
<div style="left:1271px;top:225px;width:166px;height:18px;border:4px solid #35b65b"></div>
<div class="an" style="left:1440.500px;top:224px">Pointer to the <span class="k">SECURITY_ATTRIBUTES</span> <span style="letter-spacing:-0.1px">structure.</span></div>
<div style="left:1903px;top:117px;width:2px;height:591px;background:#c9c9c9"></div>
<div style="left:1905px;top:117px;width:9px;height:591px;background:#fbfbfb"></div>
<div style="left:1905px;top:117px;width:9px;height:247px;background:#a8a8a8"></div>
<div style="left:1270px;top:708px;width:635px;height:2px;background:#cfcdcb"></div>
<div style="left:1270px;top:710px;width:635px;height:7px;background:#fbfbfb"></div>
<div style="left:1270px;top:710px;width:400px;height:7px;background:#aaaaaa"></div>
<div style="left:1903px;top:708px;width:11px;height:9px;background:#ececec"></div>
<div style="left:1268px;top:717px;width:648px;height:2px;background:#85878d"></div>
<div style="left:4px;top:722px;width:1243px;height:21px;background:#c0c0c0"></div>
<div style="left:4px;top:741px;width:1243px;height:2px;background:#9e9e9e"></div>
<div style="left:4px;top:720px;width:1260px;height:2px;background:#dfe1e4"></div>
<div style="left:122px;top:743px;width:2px;height:227px;background:#bcb9b6"></div>
<div style="left:122px;top:723px;width:2px;height:18px;background:#9a9a9a"></div>
<div style="left:124px;top:723px;width:2px;height:18px;background:#d0d0d0"></div>
<div style="left:242px;top:743px;width:2px;height:227px;background:#bcb9b6"></div>
<div style="left:242px;top:723px;width:2px;height:18px;background:#9a9a9a"></div>
<div style="left:244px;top:723px;width:2px;height:18px;background:#d0d0d0"></div>
<div class="m" style="left:7px;top:727px;">Address</div>
<div class="m" style="left:126.5px;top:727px;">Address</div>
<div class="m" style="left:246.5px;top:727px;">Comments</div>
<div class="sel" style="left:124.5px;top:743px;width:118px;height:12px;"></div>
<div style="left:122px;top:751px;width:123px;height:18px;border:3px solid #35b65b;background:rgba(255,255,255,0.7)"></div>
<div class="m z" style="left:7.5px;top:743px;">0000000000CAF938</div>
<div class="m z" style="left:128px;top:743px;">0000000000000018</div>
<div class="m z" style="left:7.5px;top:755px;">0000000000CAF940</div>
<div class="m z" style="left:128px;top:755px;">0000000000CAF950</div>
<div class="m z" style="left:7.5px;top:767px;">0000000000CAF948</div>
<div class="m z" style="left:128px;top:767px;">0000000000000000</div>
<div class="m z" style="left:7.5px;top:779px;">0000000000CAF950</div>
<div class="m z" style="left:128px;top:779px;">0000000000040001</div>
<div class="m z" style="left:7.5px;top:791px;">0000000000CAF958</div>
<div class="m z" style="left:128px;top:791px;">0000000000000000</div>
<div class="m z" style="left:7.5px;top:803px;">0000000000CAF960</div>
<div class="m z" style="left:128px;top:803px;">0000000000000000</div>
<div class="m z" style="left:7.5px;top:815px;">0000000000CAF968</div>
<div class="m z" style="left:128px;top:815px;">0000000000000000</div>
<div class="m z" style="left:7.5px;top:827px;">0000000000CAF970</div>
<div class="m z" style="left:128px;top:827px;">0000000011121080</div>
<div class="m z" style="left:7.5px;top:839px;">0000000000CAF978</div>
<div class="m z" style="left:128px;top:839px;">00000000041D6570</div>
<div class="m z" style="left:7.5px;top:851px;">0000000000CAF980</div>
<div class="m z" style="left:128px;top:851px;">0000000000000000</div>
<div class="m z" style="left:7.5px;top:863px;">0000000000CAF988</div>
<div class="m z" style="left:128px;top:863px;">0000000000000000</div>
<div class="m z" style="left:7.5px;top:875px;">0000000000CAF990</div>
<div class="m z" style="left:128px;top:875px;">0000000000000000</div>
<div class="m z" style="left:7.5px;top:887px;">0000000000CAF998</div>
<div class="m z" style="left:128px;top:887px;">0000000000000000</div>
<div class="m z" style="left:7.5px;top:899px;">0000000000CAF9A0</div>
<div class="m z" style="left:128px;top:899px;">0000000000000000</div>
<div class="m z" style="left:7.5px;top:911px;">0000000000CAF9A8</div>
<div class="m z" style="left:128px;top:911px;">0000000000000000</div>
<div class="m z" style="left:7.5px;top:923px;">0000000000CAF9B0</div>
<div class="m z" style="left:128px;top:923px;">0000000000000000</div>
<div class="m z" style="left:7.5px;top:935px;">0000000000CAF9B8</div>
<div class="m z" style="left:128px;top:935px;">0000000000000000</div>
<div class="m z" style="left:7.5px;top:947px;">0000000000CAF9C0</div>
<div class="m z" style="left:128px;top:947px;">0000000000000000</div>
<div class="m z" style="left:7.5px;top:959px;">0000000000CAF9C8</div>
<div class="m z" style="left:128px;top:959px;">0000000000000000</div>
<div class="an" style="left:250.500px;top:751px">Pointer to the <span class="k">SECURITY_DESCRIPTOR</span> <span style="letter-spacing:-0.12px">structure at which the new </span><span class="k" style="letter-spacing:-1px">DACL</span><span style="letter-spacing:-0.4px"> was added.</span></div>
<div class="vs" style="left:1247px;top:722px;width:17px;height:248px;"></div>
<div class="th" style="left:1247px;top:929px;width:17px;height:19px;"></div>
<svg style="left:1255.5px;top:730.5px;overflow:visible" width="1" height="1"><path class="ar" d="M-3.5 2L0 -1.500 3.500 2"/></svg>
<svg style="left:1255.5px;top:961.5px;overflow:visible" width="1" height="1"><path class="ar" d="M-3.5 -2L0 1.500 3.500 -2"/></svg>
<div class="vs" style="left:4px;top:970px;width:1243px;height:17px;"></div>
<div class="th" style="left:21px;top:970px;width:1082px;height:17px;"></div>
<svg style="left:12.5px;top:978.5px;overflow:visible" width="1" height="1"><path class="ar" d="M2 -3.500L-1.500 0 2 3.500"/></svg>
<svg style="left:1238.5px;top:978.5px;overflow:visible" width="1" height="1"><path class="ar" d="M-2 -3.500L1.500 0 -2 3.500"/></svg>
<div class="vs" style="left:1247px;top:970px;width:17px;height:17px;"></div>
<div class="sel" style="left:1388px;top:723px;width:509px;height:12px;"></div>
<div style="left:1270px;top:723px;width:119px;height:12px;background:#000"></div>
<div style="left:1389px;top:735px;width:2px;height:235px;background:#d0ccc8"></div>
<div style="left:1508px;top:723px;width:2px;height:247px;background:#b4b2b0"></div>
<div class="m z" style="left:1273px;top:723px;color:rgba(255,255,255,var(--a))">0000000000CAF7F0</div>
<div class="m z" style="left:1393px;top:723px;">0000000012A51520</div>
<div class="m" style="left:1512.5px;top:723px;width:384.5px;">L"\"C:\\Program Files (x86)\\VMware\\VMware Workstation\\vprintproxy.exe\""</div>
<div class="m z" style="left:1273px;top:735px;color:rgba(128,128,128,var(--a))">0000000000CAF7F8</div>
<div class="m z" style="left:1393px;top:735px;">00000000043DFBC0</div>
<div class="m" style="left:1512.5px;top:735px;width:384.5px;">"C:\\Program Files (x86)\\VMware\\VMware Workstation\\vprintproxy.exe"</div>
<div class="m z" style="left:1273px;top:747px;color:rgba(128,128,128,var(--a))">0000000000CAF800</div>
<div class="m z" style="left:1393px;top:747px;">00000000043DEF60</div>
<div class="m" style="left:1512.5px;top:747px;width:384.5px;">L"C:\\Program Files (x86)\\VMware\\VMware Workstation\\vprintproxy.exe"</div>
<div class="m z" style="left:1273px;top:759px;color:rgba(128,128,128,var(--a))">0000000000CAF808</div>
<div class="m z" style="left:1393px;top:759px;">00000000041D6570</div>
<div class="m" style="left:1512.5px;top:759px;width:384.5px;">"\\\\.\\pipe\\vmware.vprint.1904.5705.10"</div>
<div class="m z" style="left:1273px;top:771px;color:rgba(128,128,128,var(--a))">0000000000CAF810</div>
<div class="m z" style="left:1393px;top:771px;">0000000000000001</div>
<div class="m z" style="left:1273px;top:783px;color:rgba(128,128,128,var(--a))">0000000000CAF818</div>
<div class="m z" style="left:1393px;top:783px;">0000000008000600</div>
<div class="m z" style="left:1273px;top:795px;color:rgba(128,128,128,var(--a))">0000000000CAF820</div>
<div class="m z" style="left:1393px;top:795px;">0000000000000000</div>
<div class="m z" style="left:1273px;top:807px;color:rgba(128,128,128,var(--a))">0000000000CAF828</div>
<div class="m z" style="left:1393px;top:807px;">0000000000000000</div>
<div class="m z" style="left:1273px;top:819px;color:rgba(128,128,128,var(--a))">0000000000CAF830</div>
<div class="m z" style="left:1393px;top:819px;">0000000000CAF840</div>
<div class="m z" style="left:1273px;top:831px;color:rgba(128,128,128,var(--a))">0000000000CAF838</div>
<div class="m z" style="left:1393px;top:831px;">00000000043DFBC0</div>
<div class="m z" style="left:1273px;top:843px;color:rgba(128,128,128,var(--a))">0000000000CAF840</div>
<div class="m z" style="left:1393px;top:843px;">0000000000000000</div>
<div class="m z" style="left:1273px;top:855px;color:rgba(128,128,128,var(--a))">0000000000CAF848</div>
<div class="m z" style="left:1393px;top:855px;">0000000000000000</div>
<div class="m z" style="left:1273px;top:867px;color:rgba(128,128,128,var(--a))">0000000000CAF850</div>
<div class="m z" style="left:1393px;top:867px;">0000000000000000</div>
<div class="m z" style="left:1273px;top:879px;color:rgba(128,128,128,var(--a))">0000000000CAF858</div>
<div class="m z" style="left:1393px;top:879px;">0000000000000000</div>
<div class="m z" style="left:1273px;top:891px;color:rgba(128,128,128,var(--a))">0000000000CAF860</div>
<div class="m z" style="left:1393px;top:891px;">0000000000000000</div>
<div class="m z" style="left:1273px;top:903px;color:rgba(128,128,128,var(--a))">0000000000CAF868</div>
<div class="m z" style="left:1393px;top:903px;">0000000000000000</div>
<div class="m z" style="left:1273px;top:915px;color:rgba(128,128,128,var(--a))">0000000000CAF870</div>
<div class="m z" style="left:1393px;top:915px;">0000000000000000</div>
<div class="m z" style="left:1273px;top:927px;color:rgba(128,128,128,var(--a))">0000000000CAF878</div>
<div class="m z" style="left:1393px;top:927px;">0000000000000000</div>
<div class="m z" style="left:1273px;top:939px;color:rgba(128,128,128,var(--a))">0000000000CAF880</div>
<div class="m z" style="left:1393px;top:939px;">0000000000000000</div>
<div class="m z" style="left:1273px;top:951px;color:rgba(128,128,128,var(--a))">0000000000CAF888</div>
<div class="m z" style="left:1393px;top:951px;">0000000000000000</div>
<div class="m z" style="left:1273px;top:963px;height:7px;color:rgba(128,128,128,var(--a))">0000000000CAF890</div>
<div class="m z" style="left:1393px;top:963px;height:7px;">0000000000000000</div>
<div class="vs" style="left:1897px;top:722px;width:17px;height:248px;"></div>
<div class="th" style="left:1897px;top:929px;width:17px;height:19px;"></div>
<svg style="left:1905.5px;top:730.5px;overflow:visible" width="1" height="1"><path class="ar" d="M-3.5 2L0 -1.500 3.500 2"/></svg>
<svg style="left:1905.5px;top:961.5px;overflow:visible" width="1" height="1"><path class="ar" d="M-3.5 -2L0 1.500 3.500 -2"/></svg>
<div class="vs" style="left:1270px;top:970px;width:627px;height:17px;"></div>
<div class="th" style="left:1287px;top:970px;width:168px;height:17px;"></div>
<svg style="left:1278.5px;top:978.5px;overflow:visible" width="1" height="1"><path class="ar" d="M2 -3.500L-1.500 0 2 3.500"/></svg>
<svg style="left:1888.5px;top:978.5px;overflow:visible" width="1" height="1"><path class="ar" d="M-2 -3.500L1.500 0 -2 3.500"/></svg>
<div class="vs" style="left:1897px;top:970px;width:17px;height:17px;"></div>
<div style="left:0px;top:989px;width:1920px;height:53px;background:#ececec"></div>
<div class="u" style="left:1.5px;top:997px;font-size:10.8px">Command:</div>
<div style="left:55px;top:995px;width:1862px;height:2px;background:#e2e2e2"></div>
<div style="left:57px;top:997px;width:1860px;height:17px;background:#fff"></div>
<div style="left:55px;top:1014px;width:1862px;height:2px;background:#dcdcdc"></div>
<div style="left:0px;top:1017px;width:1920px;height:2px;background:#d2d2d2"></div>
<div style="left:0px;top:1019px;width:1920px;height:21px;background:#c1c1c1"></div>
<div style="left:2px;top:1020px;width:66px;height:19px;background:#ffff00"></div>
<div class="u" style="left:1px;top:1021px;width:66px;text-align:center;font-size:10.5px;color:rgba(255,40,20,0.4)">Paused</div>
<div style="left:72px;top:1020px;width:2px;height:19px;background:#a4a4a4"></div>
<div style="left:72px;top:1020px;width:1846px;height:2px;background:#adadad"></div>
<div class="u" style="left:76.5px;top:1021px;letter-spacing:-0.16px">Dump: 0000000000CAF938 -&gt; 0000000000CAF93F (0x00000008 bytes)</div>
<div style="left:0px;top:1040px;width:1920px;height:2px;background:#6e6e6e"></div>
</div></body></html>
